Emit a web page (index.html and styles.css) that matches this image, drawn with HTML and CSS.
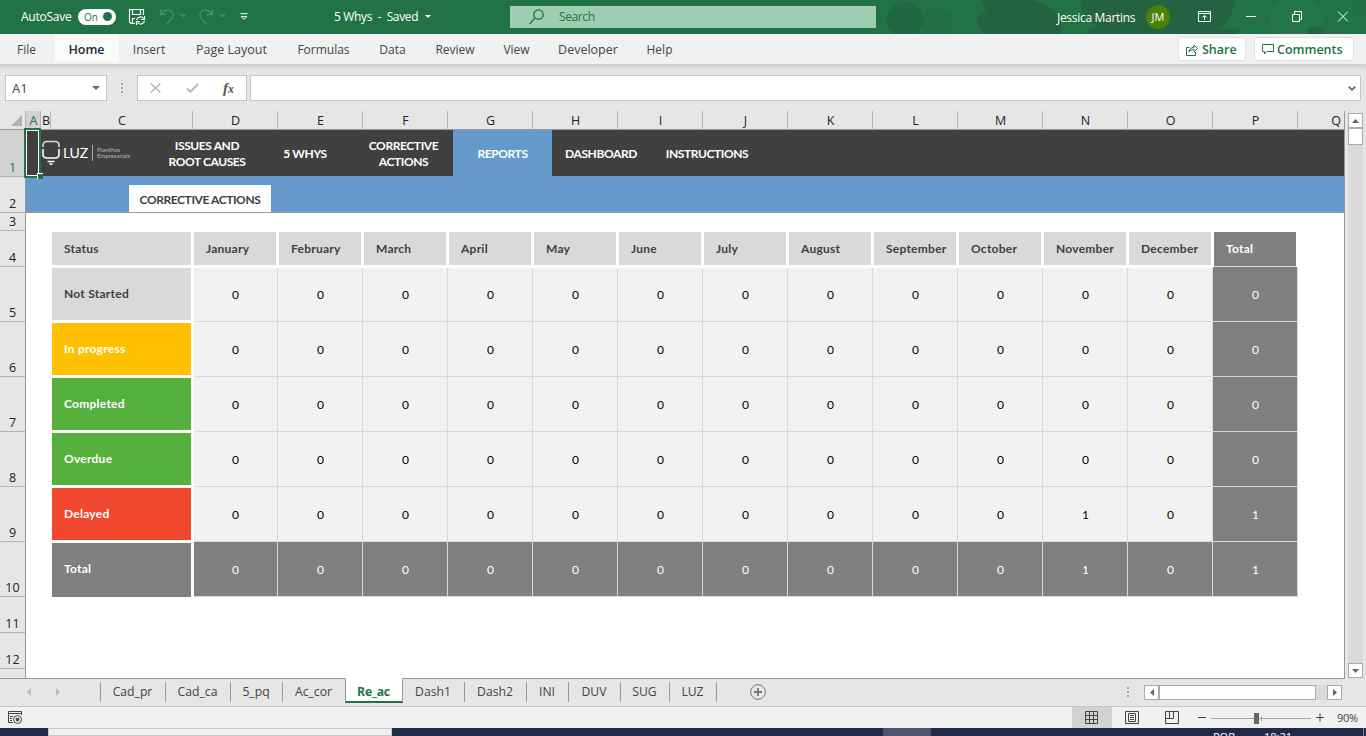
FILE: index.html
```html
<!DOCTYPE html>
<html>
<head>
    <meta charset="utf-8" />
    <title>5 Whys</title>
    <link rel="stylesheet" href="styles.css">
</head>
<body>
    <div class="titlebar">
        <svg class="title_art" width="506" height="34" viewBox="0 0 506 34">
            <g fill="#246341">
                <circle cx="45" cy="20" r="18" opacity=".7"/><circle cx="78" cy="24" r="16" opacity=".4"/>
                <path d="M122 0H172C194 6 204 20 201 34H128C114 28 112 18 126 11Z"/>
                <path d="M222 0H374C374 16 368 26 352 29H380L376 34H226C228 30 230 28 236 26C226 20 220 10 222 0Z"/>
            </g>
            <circle cx="436" cy="22" r="26" fill="#247748"/>
            <circle cx="456" cy="36" r="10" fill="#246341"/><circle cx="502" cy="6" r="9" fill="#246341" opacity=".4"/>
        </svg>
        <span class="autosave">AutoSave</span>
        <span class="toggle">On<i></i></span>
        <svg class="ic_save" width="18" height="18" viewBox="0 0 18 18" fill="none" stroke="#fff" stroke-width="1.2">
            <path d="M7 15.500H3L1.500 14V1.500H15.500V7M4.500 1.500V6.500H12.500V1.500M4.500 15.500V10.500H7"/>
            <path d="M8.500 12A4 4 0 0 1 15.500 10.500M16.500 8V11.500H13M16.500 13A4 4 0 0 1 9.500 14.500M8.500 17V13.500H12"/>
        </svg>
        <svg class="ic_undo" width="66" height="18" viewBox="0 0 66 18" fill="none" stroke="#4a9068" stroke-width="1.300">
            <path d="M1.500 1V6.500H7M2 6C5 2 10 0 13 4C16 8 13 11 7 16.500M22 6L24.500 8.500L27 6"/>
            <path d="M53.500 1V6.500H48M53 6C50 2 45 0 42 4C39 8 42 11 48 16.500M61 6L63.500 8.500L66 6"/>
        </svg>
        <svg class="ic_more" width="8" height="7" viewBox="0 0 8 7"><path d="M.5 .7H7.500M1 3.500H7L4 6.300Z" fill="none" stroke="#fff"/></svg>
        <span class="docname">5 Whys&nbsp; -&nbsp; Saved</span>
        <svg class="ic_caret" width="6" height="3" viewBox="0 0 6 3"><path d="M0 0H6L3 3Z" fill="#fff"/></svg>
        <div class="search">
            <svg width="15" height="16" viewBox="0 0 15 16" fill="none" stroke="#217346" stroke-width="1.300"><circle cx="9.500" cy="5.500" r="4.700"/><path d="M6 9L.5 15"/></svg>
            <span>Search</span>
        </div>
        <span class="user">Jessica Martins</span>
        <span class="avatar">JM</span>
        <svg class="ic_ribbon" width="13" height="11" viewBox="0 0 13 11" fill="none" stroke="#fff"><path d="M.5.5H12.500V10.500H.5ZM.5 2.500H12.500M6.500 9V4.500M4.300 6.500L6.500 4.300L8.700 6.500"/></svg>
        <svg class="ic_win" width="102" height="11" viewBox="0 0 102 11" fill="none" stroke="#fff"><path d="M0 5.500H10M46.500 3.500H53.500V10.500H46.500ZM48.500 3V.5H55.500V8.500H54M92 .5L102 10.500M102 .5L92 10.500"/></svg>
    </div>

    <div class="ribbon">
        <span class="tab t_file">File</span>
        <span class="tab t_home">Home</span>
        <span class="tab t_insert">Insert</span>
        <span class="tab t_layout">Page Layout</span>
        <span class="tab t_formulas">Formulas</span>
        <span class="tab t_data">Data</span>
        <span class="tab t_review">Review</span>
        <span class="tab t_view">View</span>
        <span class="tab t_dev">Developer</span>
        <span class="tab t_help">Help</span>
        <div class="ribbon_right">
            <span class="rbtn share"><svg width="12" height="12" viewBox="0 0 12 12" fill="none" stroke="#217346"><path d="M3.500 3.500H.5V11.500H9.500V8M3 8C3 5 5 3.500 8 3.500V1L11.500 4.500L8 8V5.500C6 5.500 4 6 3 8Z"/></svg>Share</span>
            <span class="rbtn comments"><svg width="12" height="11" viewBox="0 0 12 11" fill="none" stroke="#217346"><path d="M.5.5H11.500V7.500H5L2.500 10V7.500H.5Z"/></svg>Comments</span>
        </div>
    </div>

    <div class="formula_row">
        <div class="namebox"><span>A1</span><svg width="8" height="4" viewBox="0 0 8 4"><path d="M0 0H8L4 4Z" fill="#666"/></svg></div>
        <div class="dots"><i></i><i></i><i></i></div>
        <div class="fx">
            <svg width="11" height="10" viewBox="0 0 11 10" fill="none" stroke="#bdbdbd" stroke-width="1.600"><path d="M.7.5L10.300 9.500M10.300.5L.7 9.500"/></svg>
            <svg width="13" height="10" viewBox="0 0 13 10" fill="none" stroke="#bdbdbd" stroke-width="2.200"><path d="M.8 5.500L4.500 8.700L12.200.8"/></svg>
            <span>f<small>x</small></span>
        </div>
        <div class="formula"><svg width="8" height="5" viewBox="0 0 8 5" fill="none" stroke="#666" stroke-width="1.800"><path d="M.7.7L4 3.800L7.300.7"/></svg></div>
    </div>

    <div class="workarea">
        <div class="sheet">
            <div class="colheads">
                <span class="corner"><svg width="11" height="11" viewBox="0 0 11 11"><path d="M11 0V11H0Z" fill="#b1b1b1"/></svg></span>
                <span class="sel">A</span><span>B</span><span>C</span><span>D</span><span>E</span><span>F</span><span>G</span><span>H</span><span>I</span><span>J</span><span>K</span><span>L</span><span>M</span><span>N</span><span>O</span><span>P</span><span class="last">Q</span>
            </div>
            <div class="sheet_main">
                <div class="rowheads">
                    <span class="sel">1</span><span>2</span><span>3</span><span>4</span><span>5</span><span>6</span><span>7</span><span>8</span><span>9</span><span>10</span><span>11</span><span>12</span><span></span>
                </div>
                <div class="cells">
                    <div class="nav">
                        <div class="logo">
                            <svg width="18" height="26" viewBox="0 0 18 26" fill="none" stroke="#fff" stroke-width="1.600">
                                <path d="M1 7V5.500Q1 1.500 5 1.500H13Q17 1.500 17 5.500V7" stroke-opacity=".8"/>
                                <path d="M1 9V14Q1 18 5 18H13Q17 18 17 14V9"/>
                                <path d="M5.500 21.500H12.500M7.500 24H10.500"/>
                            </svg>
                            <span class="logo_name">LUZ</span>
                            <span class="logo_sub">Planilhas<br>Empresariais</span>
                        </div>
                        <span class="n1">ISSUES AND<br>ROOT CAUSES</span>
                        <span class="n2">5 WHYS</span>
                        <span class="n3">CORRECTIVE<br>ACTIONS</span>
                        <span class="n4">REPORTS</span>
                        <span class="n5">DASHBOARD</span>
                        <span class="n6">INSTRUCTIONS</span>
                        <div class="selection"><i></i></div>
                    </div>
                    <div class="subnav"><span>CORRECTIVE ACTIONS</span></div>
                    <div class="report">
                        <b class="h">Status</b><b class="h">January</b><b class="h">February</b><b class="h">March</b><b class="h">April</b><b class="h">May</b><b class="h">June</b><b class="h">July</b><b class="h">August</b><b class="h">September</b><b class="h">October</b><b class="h">November</b><b class="h">December</b><b class="h total">Total</b>

                        <b class="h name">Not Started</b><i class="d1 r1">0</i><i class="r1">0</i><i class="r1">0</i><i class="r1">0</i><i class="r1">0</i><i class="r1">0</i><i class="r1">0</i><i class="r1">0</i><i class="r1">0</i><i class="r1">0</i><i class="r1">0</i><i class="r1">0</i><i class="sum">0</i>

                        <b class="h name yellow">In progress</b><i class="d1">0</i><i>0</i><i>0</i><i>0</i><i>0</i><i>0</i><i>0</i><i>0</i><i>0</i><i>0</i><i>0</i><i>0</i><i class="sum">0</i>

                        <b class="h name green">Completed</b><i class="d1">0</i><i>0</i><i>0</i><i>0</i><i>0</i><i>0</i><i>0</i><i>0</i><i>0</i><i>0</i><i>0</i><i>0</i><i class="sum">0</i>

                        <b class="h name green">Overdue</b><i class="d1">0</i><i>0</i><i>0</i><i>0</i><i>0</i><i>0</i><i>0</i><i>0</i><i>0</i><i>0</i><i>0</i><i>0</i><i class="sum">0</i>

                        <b class="h name red">Delayed</b><i class="d1">0</i><i>0</i><i>0</i><i>0</i><i>0</i><i>0</i><i>0</i><i>0</i><i>0</i><i>0</i><i>1</i><i>0</i><i class="sum">1</i>

                        <b class="h name grey">Total</b><i class="d1 sum">0</i><i class="sum">0</i><i class="sum">0</i><i class="sum">0</i><i class="sum">0</i><i class="sum">0</i><i class="sum">0</i><i class="sum">0</i><i class="sum">0</i><i class="sum">0</i><i class="sum">1</i><i class="sum">0</i><i class="sum">1</i>
                    </div>
                </div>
            </div>
        </div>
        <div class="vscroll">
            <span class="sbtn"><svg width="7" height="4" viewBox="0 0 7 4"><path d="M0 4H7L3.500 0Z" fill="#666"/></svg></span>
            <span class="vthumb"></span>
            <span class="sbtn bottom"><svg width="7" height="4" viewBox="0 0 7 4"><path d="M0 0H7L3.500 4Z" fill="#666"/></svg></span>
        </div>
    </div>

    <div class="sheettabs">
        <div class="arrows">
            <svg width="4" height="8" viewBox="0 0 4 8"><path d="M4 0V8L0 4Z" fill="#bdbdbd"/></svg>
            <svg width="4" height="8" viewBox="0 0 4 8"><path d="M0 0V8L4 4Z" fill="#bdbdbd"/></svg>
        </div>
        <span class="st s1">Cad_pr</span><span class="st s2">Cad_ca</span><span class="st s3">5_pq</span><span class="st s4">Ac_cor</span><span class="st active">Re_ac</span><span class="st s6">Dash1</span><span class="st s7">Dash2</span><span class="st s8">INI</span><span class="st s9">DUV</span><span class="st s10">SUG</span><span class="st s11">LUZ</span>
        <svg class="ic_add" width="16" height="16" viewBox="0 0 16 16" fill="none" stroke="#777"><circle cx="8" cy="8" r="7.400"/><path d="M4 8H12M8 4V12" stroke-width="1.800"/></svg>
        <div class="dots hdots"><i></i><i></i><i></i></div>
        <div class="hscroll">
            <span class="sbtn"><svg width="4" height="7" viewBox="0 0 4 7"><path d="M4 0V7L0 3.500Z" fill="#666"/></svg></span>
            <span class="hthumb"></span>
            <span class="sbtn"><svg width="4" height="7" viewBox="0 0 4 7"><path d="M0 0V7L4 3.500Z" fill="#666"/></svg></span>
        </div>
    </div>

    <div class="status">
        <svg class="ic_macro" width="15" height="13" viewBox="0 0 15 13" fill="none" stroke="#444"><path d="M5 11.500H.5V.5H13.500V4M.5 2.500H13.500M2 5.500H5M2 7.500H4M2 9.500H4"/><circle cx="9.500" cy="8.500" r="4"/><circle cx="9.500" cy="8.500" r="1.500" fill="#444"/></svg>
        <span class="view on"><svg width="13" height="13" viewBox="0 0 13 13" fill="none" stroke="#444"><path d="M.5.5H12.500V12.500H.5ZM.5 4.500H12.500M.5 8.500H12.500M4.500.5V12.500M8.500.5V12.500"/></svg></span>
        <span class="view"><svg width="14" height="13" viewBox="0 0 14 13" fill="none" stroke="#444"><path d="M.5.5H13.500V12.500H.5ZM3.500 2.500H10.500V10.500H3.500ZM5 4.500H9M5 6.500H9M5 8.500H9"/></svg></span>
        <span class="view"><svg width="14" height="13" viewBox="0 0 14 13" fill="none" stroke="#444"><path d="M.5.5H13.500V12.500H.5ZM.5 7.500H8.500V.5M4.500.5V7.500"/></svg></span>
        <svg class="zoombar" width="126" height="12" viewBox="0 0 126 12"><path d="M0 5.500H8M118 5.500H126M122 1.500V9.500" stroke="#444"/><path d="M13 6.500H113M63.500 4V9" stroke="#a6a6a6"/><path d="M56 1H61V12H56Z" fill="#666"/></svg>
        <span class="pct">90%</span>
    </div>
    <div class="taskbar">
        <span class="tb_start"></span><span class="tb_search"></span><span class="tb_app"></span>
        <span class="tb_lang">POR</span><span class="tb_time">18:21</span><span class="tb_end"></span>
    </div>
</body>
</html>
```
FILE: styles.css
```css
* {
    box-sizing:border-box;
}
body {
    margin:0;
    width:1366px;
    height:736px;
    overflow:hidden;
    background:#e6e6e6;
    font-family:'Open Sans','Noto Sans',sans-serif;
    font-size:12px;
    color:#444;
}
svg {
    display:block;
    flex:none;
}
i {
    font-style:normal;
}

/* title bar */
.titlebar {
    position:relative;
    display:flex;
    align-items:center;
    height:34px;
    padding:0 0 1px 21px;
    background:#217346;
    color:#fff;
    white-space:nowrap;
}
.titlebar > * {
    flex:none;
}
.title_art {
    position:absolute;
    left:860px;
    top:0;
}
.autosave {
    width:57px;
    letter-spacing:-0.25px;
}
.toggle {
    display:flex;
    align-items:center;
    justify-content:space-between;
    width:38px;
    height:16px;
    padding:0 4px 0 6px;
    border-radius:8px;
    background:#fff;
    color:#217346;
    font-size:10px;
}
.toggle i {
    width:9px;
    height:9px;
    border-radius:50%;
    background:#217346;
}
.ic_save {
    margin-left:12px;
}
.ic_undo {
    margin-left:13px;
}
.ic_more {
    margin-left:15px;
}
.docname {
    width:86px;
    margin-left:86px;
    letter-spacing:-0.35px;
}
.ic_caret {
    margin-left:5px;
}
.search {
    display:flex;
    align-items:center;
    width:366px;
    height:22px;
    margin-left:79px;
    padding-left:19px;
    background:#9fcdb3;
    color:#217346;
    letter-spacing:-0.4px;
}
.search span {
    margin-left:15px;
}
.user {
    position:relative;
    top:1px;
    width:79px;
    margin-left:181px;
    letter-spacing:-0.3px;
}
.avatar {
    position:relative;
    width:24px;
    height:24px;
    margin-left:10px;
    border-radius:50%;
    background:#498205;
    font-size:11px;
    line-height:24px;
    text-align:center;
}
.ic_ribbon {
    position:relative;
    margin-left:28px;
}
.ic_win {
    position:relative;
    margin-left:35px;
}

/* ribbon tabs */
.ribbon {
    display:flex;
    height:30px;
    background:#f1f1f1;
    line-height:32px;
    white-space:nowrap;
}
.tab {
    flex:none;
    text-align:center;
}
.t_file {
    width:55px;
    padding-right:2px;
}
.t_home {
    width:64px;
    height:28px;
    padding-right:1px;
    background:#fafaf9;
    color:#1f2a38;
    font-size:12.5px;
    font-weight:600;
}
.t_insert {
    width:60px;
}
.t_layout {
    width:105px;
    font-size:12.5px;
}
.t_formulas {
    width:79px;
}
.t_data {
    width:59px;
}
.t_review {
    width:66px;
}
.t_view {
    width:57px;
}
.t_dev {
    width:86px;
    font-size:12.5px;
}
.t_help {
    width:57px;
}
.ribbon_right {
    display:flex;
    gap:8px;
    margin:3px 12px 0 auto;
}
.rbtn {
    display:flex;
    align-items:center;
    height:24px;
    padding-top:1px;
    border:1px solid #e1e1e1;
    border-radius:2px;
    background:#fff;
    color:#217346;
    font-size:12.5px;
    font-weight:600;
}
.rbtn svg {
    margin:0 4px 0 7px;
}
.share {
    width:68px;
}
.comments {
    width:100px;
}
.comments svg {
    margin-right:3px;
}

/* formula bar */
.formula_row {
    display:flex;
    height:47px;
    padding:11px 5px 10px;
    background:linear-gradient(#cdcdcd,#e6e6e6 6px);
}
.namebox,
.fx,
.formula {
    display:flex;
    align-items:center;
    height:26px;
    border:1px solid #c6c6c6;
    background:#fff;
}
.namebox {
    justify-content:space-between;
    width:102px;
    padding:0 6px;
    font-size:13px;
}
.dots {
    display:flex;
    flex-direction:column;
    justify-content:center;
    gap:2px;
    width:30px;
    padding-left:14px;
}
.dots i {
    width:2px;
    height:2px;
    background:#a6a6a6;
}
.fx {
    width:110px;
    padding-left:12px;
}
.fx svg + svg {
    margin-left:25px;
}
.fx span {
    margin-left:24px;
    font:italic bold 15px/20px 'Liberation Serif',serif;
    color:#555;
}
.fx small {
    font-size:12px;
}
.formula {
    justify-content:flex-end;
    width:1111px;
    margin-left:3px;
    padding-right:4px;
}

/* sheet */
.workarea {
    display:flex;
    height:568px;
}
.sheet {
    width:1345px;
    border-right:1px solid #999;
    border-bottom:1px solid #999;
}
.colheads {
    display:grid;
    grid-template-columns:26px 15px 10px 142px repeat(13,85px) 46px;
    width:1344px;
    height:19px;
    border-bottom:1px solid #999;
    color:#222;
    font-size:12.5px;
    line-height:19px;
    text-align:center;
}
.colheads span {
    padding-left:1px;
    border-right:1px solid #b5b5b5;
}
.colheads .corner {
    display:flex;
    justify-content:flex-end;
    align-items:center;
    padding-right:3px;
}
.colheads .last {
    padding-right:3px;
    border-right:0;
    text-align:right;
}
.colheads .sel,
.rowheads .sel {
    background:#d2d2d2;
    color:#217346;
}
.sheet_main {
    display:flex;
    height:548px;
}
.rowheads {
    display:grid;
    grid-template-rows:47px 36px 18px 36px repeat(6,55px) 36px 36px 9px;
    width:26px;
    border-right:1px solid #999;
    color:#222;
    font-size:12.5px;
    text-align:center;
}
.rowheads span {
    display:flex;
    justify-content:center;
    align-items:flex-end;
    border-bottom:1px solid #b5b5b5;
    line-height:17px;
}
.rowheads span:last-child {
    border-bottom:0;
}
.cells {
    width:1318px;
    background:#fff;
}
.nav {
    position:relative;
    display:flex;
    height:46px;
    background:#404040;
    color:#fff;
    font-family:Lato,sans-serif;
    font-weight:bold;
    letter-spacing:-0.4px;
    line-height:16px;
    text-align:center;
}
.nav > span {
    display:flex;
    justify-content:center;
    align-items:center;
    padding-top:1px;
}
.logo {
    display:flex;
    align-items:center;
    width:132px;
    padding-left:16px;
}
.logo_name {
    margin-left:3px;
    padding-right:4px;
    border-right:1px solid #aaa;
    font-size:14px;
    font-weight:normal;
    letter-spacing:-0.2px;
}
.logo_sub {
    margin-left:4px;
    color:#bbb;
    font-size:6px;
    font-weight:normal;
    letter-spacing:0;
    line-height:6px;
    text-align:left;
}
.n1,
.n2,
.n5 {
    width:98px;
}
.n3,
.n4 {
    width:99px;
}
.nav .n4 {
    background:#6699cc;
}
.n6 {
    width:114px;
}
.selection {
    position:absolute;
    left:-2px;
    top:-2px;
    width:17px;
    height:50px;
    border:2px solid #217346;
    box-shadow:inset 0 0 0 1px #fff;
}
.selection i {
    position:absolute;
    right:-4px;
    bottom:-3px;
    width:6px;
    height:6px;
    border:solid #fff;
    border-width:1px 0 0 1px;
    background:#217346;
}
.subnav {
    display:flex;
    height:37px;
    padding:9px 0 0 103px;
    border-bottom:1px solid #999;
    background:#6699cc;
}
.subnav span {
    width:142px;
    background:#fff;
    color:#404040;
    font:bold 12px/30px Lato,sans-serif;
    letter-spacing:-0.42px;
    text-align:center;
}
.report {
    display:grid;
    grid-template-columns:142px repeat(13,85px);
    grid-template-rows:36px repeat(6,55px);
    margin:18px 0 0 25px;
    font-family:Lato,sans-serif;
}
.report .h {
    display:flex;
    align-items:center;
    margin:1px 2px 2px 1px;
    padding-left:12px;
    background:#d9d9d9;
    color:#404040;
    letter-spacing:0.25px;
}
.report .name {
    padding-bottom:2px;
}
.report i {
    display:flex;
    justify-content:center;
    align-items:center;
    padding-left:1px;
    border:solid #d9d9d9;
    border-width:0 1px 1px 0;
    background:#f2f2f2;
    color:#000;
}
.report .r1 {
    margin-top:1px;
}
.report .d1 {
    margin-left:1px;
    padding-left:0;
}
.report .total {
    margin-bottom:0;
    padding-bottom:1px;
    border-bottom:1px solid #d9d9d9;
    background:#808080;
    color:#fff;
}
.report .sum {
    background:#808080;
    color:#fff;
}
.report .yellow {
    background:#ffc000;
    color:#fff;
}
.report .green {
    background:#56b03e;
    color:#fff;
}
.report .red {
    background:#f1472e;
    color:#fff;
}
.report .grey {
    margin-bottom:0;
    padding-bottom:4px;
    background:#808080;
    color:#fff;
}

/* scrollbars */
.sbtn {
    display:flex;
    flex:none;
    justify-content:center;
    align-items:center;
    width:15px;
    height:15px;
    border:1px solid #ababab;
    background:#fff;
}
.vscroll {
    display:flex;
    flex-direction:column;
    width:15px;
    height:565px;
    margin:2px 0 0 3px;
    background:#dadada;
}
.vthumb {
    height:17px;
    border:1px solid #ababab;
    background:#fff;
}
.vscroll .bottom {
    margin-top:auto;
}

/* sheet tabs */
.sheettabs {
    display:flex;
    height:28px;
    border-bottom:1px solid #c6c6c6;
}
.arrows {
    display:flex;
    align-items:center;
    gap:25px;
    width:100px;
    padding:0 0 2px 27px;
}
.st {
    height:20px;
    margin-top:3px;
    padding-right:1px;
    border-right:1px solid #999;
    font-size:12.2px;
    line-height:19px;
    text-align:center;
}
.s1 {
    width:66px;
    border-left:1px solid #999;
}
.s2 {
    width:65px;
}
.s3 {
    width:52px;
}
.s4 {
    width:62px;
    border-right:0;
}
.st.active {
    width:58px;
    height:25px;
    margin-top:-1px;
    border:1px solid #999;
    border-width:0 1px;
    border-bottom:2px solid #217346;
    background:#fff;
    color:#217346;
    font-weight:bold;
    letter-spacing:-0.2px;
    line-height:27px;
}
.s6 {
    width:62px;
}
.s7 {
    width:62px;
}
.s8 {
    width:42px;
}
.s9 {
    width:52px;
}
.s10 {
    width:49px;
}
.s11 {
    width:47px;
}
.ic_add {
    margin:5px 0 0 33px;
}
.hdots {
    width:17px;
    height:26px;
    margin-left:361px;
    padding-left:0;
}
.hscroll {
    display:flex;
    width:198px;
    height:15px;
    margin-top:6px;
    background:#dadada;
}
.hthumb {
    width:157px;
    margin-right:auto;
    border:1px solid #ababab;
    background:#fff;
}

/* status bar */
.status {
    display:flex;
    align-items:center;
    height:21px;
    padding-left:8px;
    background:#f1f1f1;
}
.ic_macro {
    margin-right:1049px;
}
.view {
    display:flex;
    justify-content:center;
    align-items:center;
    width:40px;
    height:21px;
    padding-bottom:1px;
}
.view.on {
    padding-right:1px;
    background:#d2d2d2;
}
.zoombar {
    margin-left:6px;
}
.pct {
    margin-left:13px;
    padding-bottom:1px;
    font-size:11px;
    letter-spacing:-0.3px;
}
.taskbar {
    display:flex;
    height:8px;
    overflow:hidden;
    background:#1f2a47;
    color:#fff;
    font-size:11px;
}
.tb_start {
    width:48px;
}
.tb_search {
    width:344px;
    border:1px solid #c6c6c6;
    background:#f1f1f1;
}
.tb_app {
    width:48px;
    margin-left:491px;
    background:#4b556c;
}
.tb_lang {
    width:51px;
    margin-left:282px;
    line-height:18px;
}
.tb_time {
    line-height:18px;
}
.tb_end {
    width:1px;
    margin:0 2px 0 auto;
    background:#7a8294;
}
```
